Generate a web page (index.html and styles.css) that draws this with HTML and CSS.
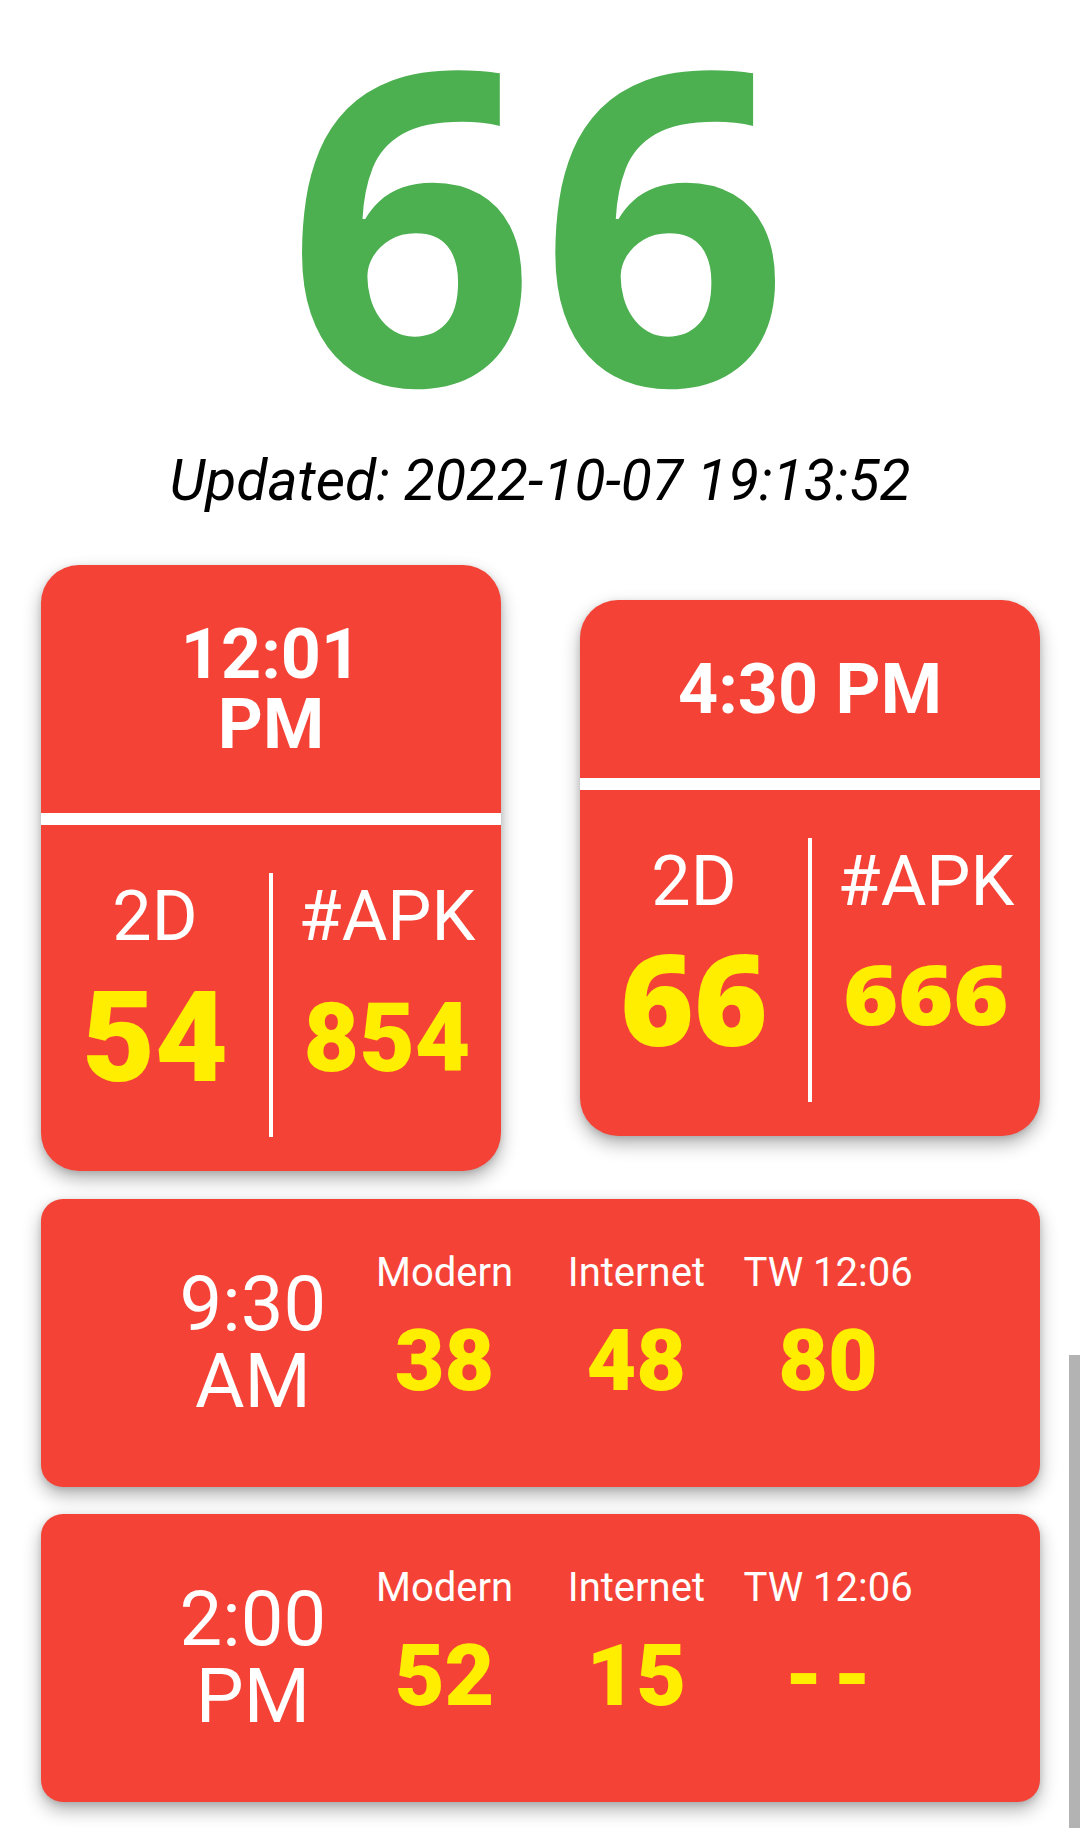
FILE: index.html
```html
<!DOCTYPE html>
<html lang="en">
<head>
<meta charset="utf-8">
<title>2D Live</title>
<link rel="stylesheet" href="styles.css">
</head>
<body>
<main class="page">
  <div class="hero">66</div>
  <div class="updated">Updated: 2022-10-07 19:13:52</div>

  <section class="pair">
    <div class="card">
      <div class="card-head">12:01<br>PM</div>
      <div class="split">
        <div class="col">
          <div class="lbl">2D</div>
          <div class="num num-2d">54</div>
        </div>
        <div class="vline"></div>
        <div class="col">
          <div class="lbl">#APK</div>
          <div class="num num-apk">854</div>
        </div>
      </div>
    </div>

    <div class="card">
      <div class="card-head">4:30 PM</div>
      <div class="split">
        <div class="col">
          <div class="lbl">2D</div>
          <div class="num num-2d num-six">66</div>
        </div>
        <div class="vline"></div>
        <div class="col">
          <div class="lbl">#APK</div>
          <div class="num num-apk num-sixes">666</div>
        </div>
      </div>
    </div>
  </section>

  <section class="wide">
    <div class="wtime">9:30<br>AM</div>
    <div class="wcol"><div class="wlbl">Modern</div><div class="wnum">38</div></div>
    <div class="wcol"><div class="wlbl">Internet</div><div class="wnum">48</div></div>
    <div class="wcol"><div class="wlbl">TW 12:06</div><div class="wnum">80</div></div>
  </section>

  <section class="wide wide-2">
    <div class="wtime">2:00<br>PM</div>
    <div class="wcol"><div class="wlbl">Modern</div><div class="wnum">52</div></div>
    <div class="wcol"><div class="wlbl">Internet</div><div class="wnum">15</div></div>
    <div class="wcol"><div class="wlbl">TW 12:06</div><div class="wnum wdash">--</div></div>
  </section>
</main>
<div class="scrollbar"></div>
</body>
</html>
```

FILE: styles.css
```css
html, body {
  margin: 0;
  padding: 0;
}

body {
  width: 1080px;
  height: 1828px;
  overflow: hidden;
  background: #ffffff;
  font-family: Roboto, "Liberation Sans", Arial, sans-serif;
  position: relative;
}

.page {
  display: flex;
  flex-direction: column;
}

.hero {
  margin-top: 16px;
  height: 400px;
  line-height: 400px;
  font-family: "Open Sans", Roboto, sans-serif;
  font-size: 436px;
  font-weight: 700;
  color: #4caf50;
  text-align: center;
  letter-spacing: 4px;
}

.updated {
  margin-top: 33px;
  line-height: 64px;
  font-size: 57px;
  font-style: italic;
  color: #000;
  text-align: center;
}

.pair {
  margin-top: 52px;
  padding: 0 40px 0 41px;
  display: flex;
  justify-content: space-between;
  align-items: center;
}

.card {
  width: 460px;
  background: #f44336;
  border-radius: 38px;
  overflow: hidden;
  box-shadow: 0 8px 18px rgba(0, 0, 0, 0.3), 0 2px 6px rgba(0, 0, 0, 0.12);
  color: #fff;
}

.card-head {
  padding: 54px 0;
  line-height: 70px;
  font-size: 70px;
  font-weight: 700;
  text-align: center;
  border-bottom: 12px solid #ffffff;
}

.split {
  display: flex;
  height: 264px;
  padding: 48px 0 34px;
}

.col {
  flex: 1;
  display: flex;
  flex-direction: column;
  align-items: center;
}

.vline {
  width: 4px;
  background: #ffffff;
}

.lbl {
  font-size: 70px;
  line-height: 86px;
  font-weight: 400;
}

.num {
  color: #ffee00;
  font-weight: 900;
  line-height: 158px;
}

.num-2d {
  font-size: 126px;
}

.num-apk {
  font-size: 96px;
}

.num-six {
  font-family: "Open Sans", Roboto, sans-serif;
  font-weight: 800;
  line-height: 147px;
}

.num-sixes {
  font-family: "Open Sans", Roboto, sans-serif;
  font-weight: 800;
  font-size: 84px;
  line-height: 137px;
  transform: scaleX(1.12);
}

.wide {
  margin: 28px 40px 0 41px;
  height: 288px;
  background: #f44336;
  border-radius: 22px;
  box-shadow: 0 8px 18px rgba(0, 0, 0, 0.3), 0 2px 6px rgba(0, 0, 0, 0.12);
  padding: 0 116px;
  display: grid;
  grid-template-columns: repeat(4, 1fr);
  align-items: center;
  color: #fff;
}

.wide-2 {
  margin-top: 27px;
}

.wtime {
  font-size: 76px;
  line-height: 77px;
  text-align: center;
}

.wcol {
  display: flex;
  flex-direction: column;
  align-items: center;
  padding-bottom: 12px;
}

.wlbl {
  font-size: 40px;
  line-height: 48px;
  white-space: nowrap;
}

.wnum {
  font-size: 86px;
  font-weight: 900;
  line-height: 128px;
  color: #ffee00;
}

.wdash {
  letter-spacing: 10px;
  margin-right: -10px;
}

.scrollbar {
  position: absolute;
  left: 1069px;
  top: 1355px;
  width: 11px;
  height: 473px;
  background: #b3b3b3;
}
```
